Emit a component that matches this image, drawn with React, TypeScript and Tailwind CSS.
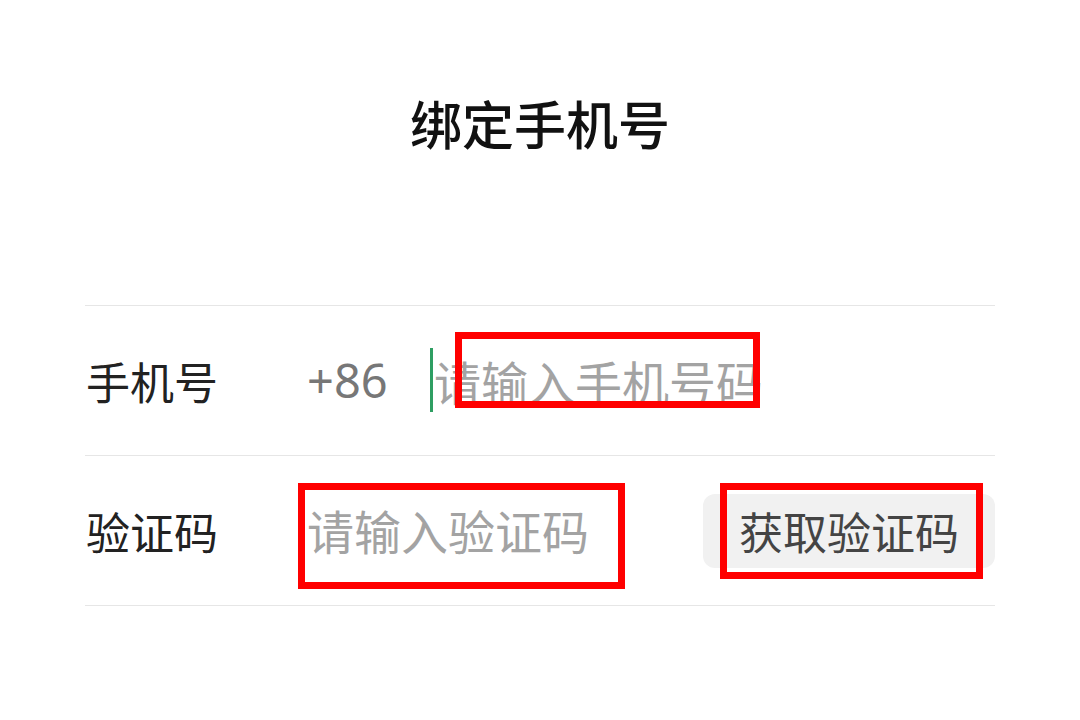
import React from "react";

const font = { fontFamily: '"Noto Sans CJK SC", "Noto Sans", sans-serif' };

function Mark({ className }: { className: string }) {
  return <div className={`pointer-events-none absolute border-[7px] border-[#ff0000] ${className}`} />;
}

export default function App() {
  return (
    <div className="h-[720px] w-[1080px] bg-white" style={font}>
      <div className="flex justify-center pt-[97px]">
        <h1 className="text-[52px] leading-[52px] font-medium text-[#111111]">绑定手机号</h1>
      </div>

      <div className="mx-[85px] mt-[156px] border-t border-[#e6e6e6]">
        {/* phone row */}
        <div className="relative flex h-[150px] items-center border-b border-[#e6e6e6]">
          <span className="w-[222px] pl-[1px] text-[44px] text-[#222222]">手机号</span>
          <span className="w-[123px] text-[47px] text-[#777777]" style={{ fontFamily: '"Noto Sans", sans-serif' }}>
            +86
          </span>
          <div className="flex items-center">
            <span className="mt-[-2px] h-[64px] w-[3px] bg-[#2e9e62]" />
            <span className="ml-[1px] text-[47px] leading-[64px] text-[#a3a3a3]">请输入手机号码</span>
          </div>
          <Mark className="left-[370px] top-[26px] h-[76px] w-[305px]" />
        </div>

        {/* code row */}
        <div className="relative flex h-[150px] items-center border-b border-[#e6e6e6]">
          <span className="w-[222px] pl-[1px] text-[44px] text-[#222222]">验证码</span>
          <span className="flex-1 text-[47px] text-[#a3a3a3]">请输入验证码</span>
          <button className="flex h-[74px] w-[292px] items-center justify-center rounded-[12px] bg-[#f1f1f1] text-[44px] text-[#444444]">
            获取验证码
          </button>
          <Mark className="left-[213px] top-[27px] h-[106px] w-[327px]" />
          <Mark className="left-[635px] top-[27px] h-[96px] w-[263px]" />
        </div>
      </div>
    </div>
  );
}
